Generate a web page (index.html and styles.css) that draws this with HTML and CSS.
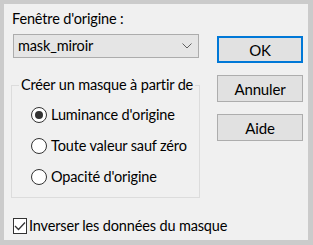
FILE: index.html
```html
<!DOCTYPE html>
<html lang="fr">

<head>
  <meta charset="utf-8">
  <title>Masque</title>
  <link rel="stylesheet" href="styles.css">
</head>

<body>
  <div class="dialog">
    <div class="left">
      <div class="label">Fenêtre d'origine :</div>
      <div class="select">
        <span>mask_miroir</span>
        <svg class="chevron" width="10" height="6" viewBox="0 0 10 6">
          <path d="M0.5 0.5 L5 5 L9.5 0.5" fill="none" stroke="#606060" stroke-width="1"/>
        </svg>
      </div>

      <fieldset class="group">
        <legend>Créer un masque à partir de</legend>
        <div class="radios">
          <div class="radio-row">
            <span class="radio checked"></span>
            <span>Luminance d'origine</span>
          </div>
          <div class="radio-row">
            <span class="radio"></span>
            <span>Toute valeur sauf zéro</span>
          </div>
          <div class="radio-row">
            <span class="radio"></span>
            <span>Opacité d'origine</span>
          </div>
        </div>
      </fieldset>

      <div class="check-row">
        <span class="checkbox">
          <svg width="12" height="10" viewBox="0 0 12 10">
            <path d="M1 5 L4.5 8.5 L11 1.5" fill="none" stroke="#333" stroke-width="1.3"/>
          </svg>
        </span>
        <span>Inverser les données du masque</span>
      </div>
    </div>

    <div class="right">
      <button class="btn default">OK</button>
      <button class="btn">Annuler</button>
      <button class="btn">Aide</button>
    </div>
  </div>
</body>

</html>
```

FILE: styles.css
```css
* {
  margin: 0;
  padding: 0;
  box-sizing: border-box;
}

body {
  background: #cbcbcb;
  font-family: Lato, 'Noto Sans', sans-serif;
  font-size: 14.5px;
  letter-spacing: -0.15px;
  color: #000;
  width: 313px;
  height: 245px;
  padding: 4px 5px 5px 4px;
  white-space: nowrap;
}

.dialog {
  display: flex;
  background: #f0f0f0;
  width: 304px;
  height: 236px;
}

.left {
  width: 188px;
  margin-left: 7px;
  padding-top: 5px;
  flex-shrink: 0;
}

.label {
  height: 20px;
  line-height: 20px;
  padding-left: 1px;
}

.select {
  display: flex;
  align-items: center;
  justify-content: space-between;
  margin: 5px 0 0 2px;
  width: 186px;
  height: 24px;
  background: #e5e5e5;
  border: 1px solid #acacac;
  padding: 0 6px 0 4px;
  line-height: 20px;
}

.group {
  margin-top: 17px;
  width: 189px;
  min-width: 0;
  height: 123px;
  border: 1px solid #dcdcdc;
  padding: 0;
}

.group legend {
  margin-left: 7px;
  padding: 0 2px;
  line-height: 20px;
}

.radios {
  display: flex;
  flex-direction: column;
  gap: 11px;
  margin-top: 10px;
  padding-left: 19px;
}

.radio-row,
.check-row {
  display: flex;
  align-items: center;
  gap: 4px;
  height: 20px;
  line-height: 20px;
}

.radio {
  width: 16px;
  height: 16px;
  border: 1px solid #333;
  border-radius: 50%;
  background: #fff;
  display: flex;
  align-items: center;
  justify-content: center;
}

.radio.checked::after {
  content: '';
  width: 8px;
  height: 8px;
  border-radius: 50%;
  background: #333;
}

.check-row {
  margin-top: 18px;
  padding-left: 2px;
  gap: 2px;
}

.checkbox {
  width: 16px;
  height: 16px;
  border: 1px solid #333;
  background: #fff;
  display: flex;
  align-items: center;
  justify-content: center;
}

.right {
  display: flex;
  flex-direction: column;
  margin-left: 18px;
  padding-top: 32px;
  gap: 12px;
}

.btn {
  width: 86px;
  height: 27px;
  background: #e1e1e1;
  border: 1px solid #adadad;
  font-family: inherit;
  font-size: 15px;
  letter-spacing: inherit;
  color: #000;
}

.btn.default {
  border: 2px solid #0078d7;
}
```
